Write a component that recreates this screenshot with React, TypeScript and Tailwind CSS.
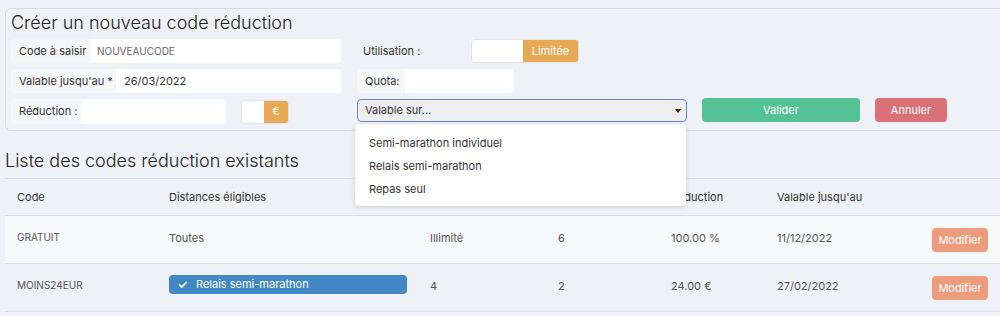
import { Check } from 'lucide-react'

const font = { fontFamily: 'Inter, "Open Sans", sans-serif' }

const rows = [
  { code: 'GRATUIT', dist: 'Toutes', quota: 'Illimité', used: '6', red: '100.00 %', date: '11/12/2022', bg: 'bg-[#f7f8fa]' },
  { code: 'MOINS24EUR', dist: null, quota: '4', used: '2', red: '24.00 €', date: '27/02/2022', bg: 'bg-[#eef1f5]' },
]

const App = () => {
  return (
    <div style={font} className="relative h-[316px] w-[1000px] overflow-hidden bg-[#eef1f5] text-[11px] text-[#333]">
      <div className="pt-2 pl-[5px]">
        {/* formulaire */}
        <div className="w-[1005px] h-[123px] rounded-md border border-[#d6dae0] px-[5px]">
          <h1 className="text-[18px] font-light leading-none pt-[5px] h-[30px] text-[#222]">Créer un nouveau code réduction</h1>
          <div className="flex">
            <div className="flex flex-col gap-[6px] w-[330px]">
              <div className="flex h-[24px] rounded-sm overflow-hidden">
                <div className="bg-[#f5f6f8] w-[80px] flex items-center pl-[8px]">Code à saisir</div>
                <div className="bg-white flex-1 flex items-center pl-[6px] text-[10px] text-[#666]">NOUVEAUCODE</div>
              </div>
              <div className="flex h-[24px] rounded-sm overflow-hidden">
                <div className="bg-[#f5f6f8] w-[105px] flex items-center pl-[8px]">Valable jusqu'au *</div>
                <div className="bg-white flex-1 flex items-center pl-[8px]">26/03/2022</div>
              </div>
              <div className="flex items-center">
                <div className="flex h-[25px] w-[215px] rounded-sm overflow-hidden">
                  <div className="bg-[#f5f6f8] w-[70px] flex items-center pl-[8px]">Réduction :</div>
                  <div className="bg-white flex-1"></div>
                </div>
                <div className="ml-[15px] flex h-[24px] w-[48px] rounded overflow-hidden border border-[#dfe2e6]">
                  <div className="bg-white flex-1"></div>
                  <div className="bg-[#e6a955] w-[24px] flex items-center justify-center text-white">€</div>
                </div>
              </div>
            </div>
            <div className="ml-[16px] w-[330px] flex flex-col">
              <div className="flex items-center h-[26px] -mt-[1px]">
                <span className="pl-[6px] w-[114px]">Utilisation :</span>
                <div className="flex h-[24px] w-[108px] rounded overflow-hidden border border-[#dfe2e6]">
                  <div className="bg-white flex-1"></div>
                  <div className="bg-[#e6a955] w-[55px] flex items-center justify-center text-white">Limitée</div>
                </div>
              </div>
              <div className="flex h-[24px] w-[157px] mt-[5px] rounded-sm overflow-hidden">
                <div className="bg-[#f5f6f8] w-[48px] flex items-center pl-[8px]">Quota:</div>
                <div className="bg-white flex-1"></div>
              </div>
              <div className="mt-[6px] h-[23px] rounded-sm border border-[#6d80d8] bg-[#eeeeee] flex items-center justify-between pl-[7px] pr-[5px]">
                <span>Valable sur...</span>
                <span className="w-0 h-0 border-l-[3px] border-r-[3px] border-t-[4px] border-l-transparent border-r-transparent border-t-[#222]"></span>
              </div>
            </div>
            <div className="ml-[15px] flex gap-[15px] items-start">
              <button className="h-[24px] w-[158px] rounded bg-[#55c196] text-white mt-[59px]">Valider</button>
              <button className="h-[24px] w-[72px] rounded bg-[#d97177] text-white mt-[59px]">Annuler</button>
            </div>
          </div>
        </div>

        {/* liste */}
        <h2 className="text-[18px] font-light leading-none mt-[21px] h-[26px] text-[#222]">Liste des codes réduction existants</h2>
        <div className="w-[995px] border-t border-[#d8dbe0]">
          <div className="grid grid-cols-[152px_261px_128px_113px_106px_1fr_auto] h-[37px] items-center border-b border-[#d8dbe0]">
            <div className="pl-[12px]">Code</div>
            <div className="pl-[12px]">Distances éligibles</div>
            <div className="pl-[12px]">Quota</div>
            <div className="pl-[12px]">Utilisé</div>
            <div className="pl-[12px]">Réduction</div>
            <div className="pl-[12px]">Valable jusqu'au</div>
            <div className="w-[68px]"></div>
          </div>
          {rows.map((r) => (
            <div key={r.code} className={`grid grid-cols-[152px_261px_128px_113px_106px_1fr_auto] h-[48px] border-b border-[#dcdfe4] text-[#555] ${r.bg}`}>
              <div className="pl-[12px] pt-[14px] text-[10px]">{r.code}</div>
              <div className="pl-[12px] pt-[14px]">
                {r.dist ? (
                  r.dist
                ) : (
                  <div className="-mt-[3px] w-[238px] h-[19px] rounded-sm bg-[#4188c5] text-white flex items-center pl-[9px] gap-[8px]">
                    <Check size={10} strokeWidth={4} />
                    <span>Relais semi-marathon</span>
                  </div>
                )}
              </div>
              <div className="pl-[12px] pt-[14px]">{r.quota}</div>
              <div className="pl-[12px] pt-[14px]">{r.used}</div>
              <div className="pl-[12px] pt-[14px]">{r.red}</div>
              <div className="pl-[12px] pt-[14px]">{r.date}</div>
              <div className="w-[68px] flex justify-end pr-[12px] pt-[12px]">
                <button className="h-[24px] w-[56px] rounded bg-[#ec9b7c] text-white">Modifier</button>
              </div>
            </div>
          ))}
        </div>
      </div>

      {/* menu déroulant */}
      <div className="absolute left-[355px] top-[124px] w-[331px] h-[82px] bg-white rounded shadow-[0_1px_4px_rgba(0,0,0,0.15)] pt-[11px] pl-[14px] flex flex-col gap-[8px] text-[#333]">
        <div className="h-[15px]">Semi-marathon individuel</div>
        <div className="h-[15px]">Relais semi-marathon</div>
        <div className="h-[15px]">Repas seul</div>
      </div>
    </div>
  )
}

export default App
